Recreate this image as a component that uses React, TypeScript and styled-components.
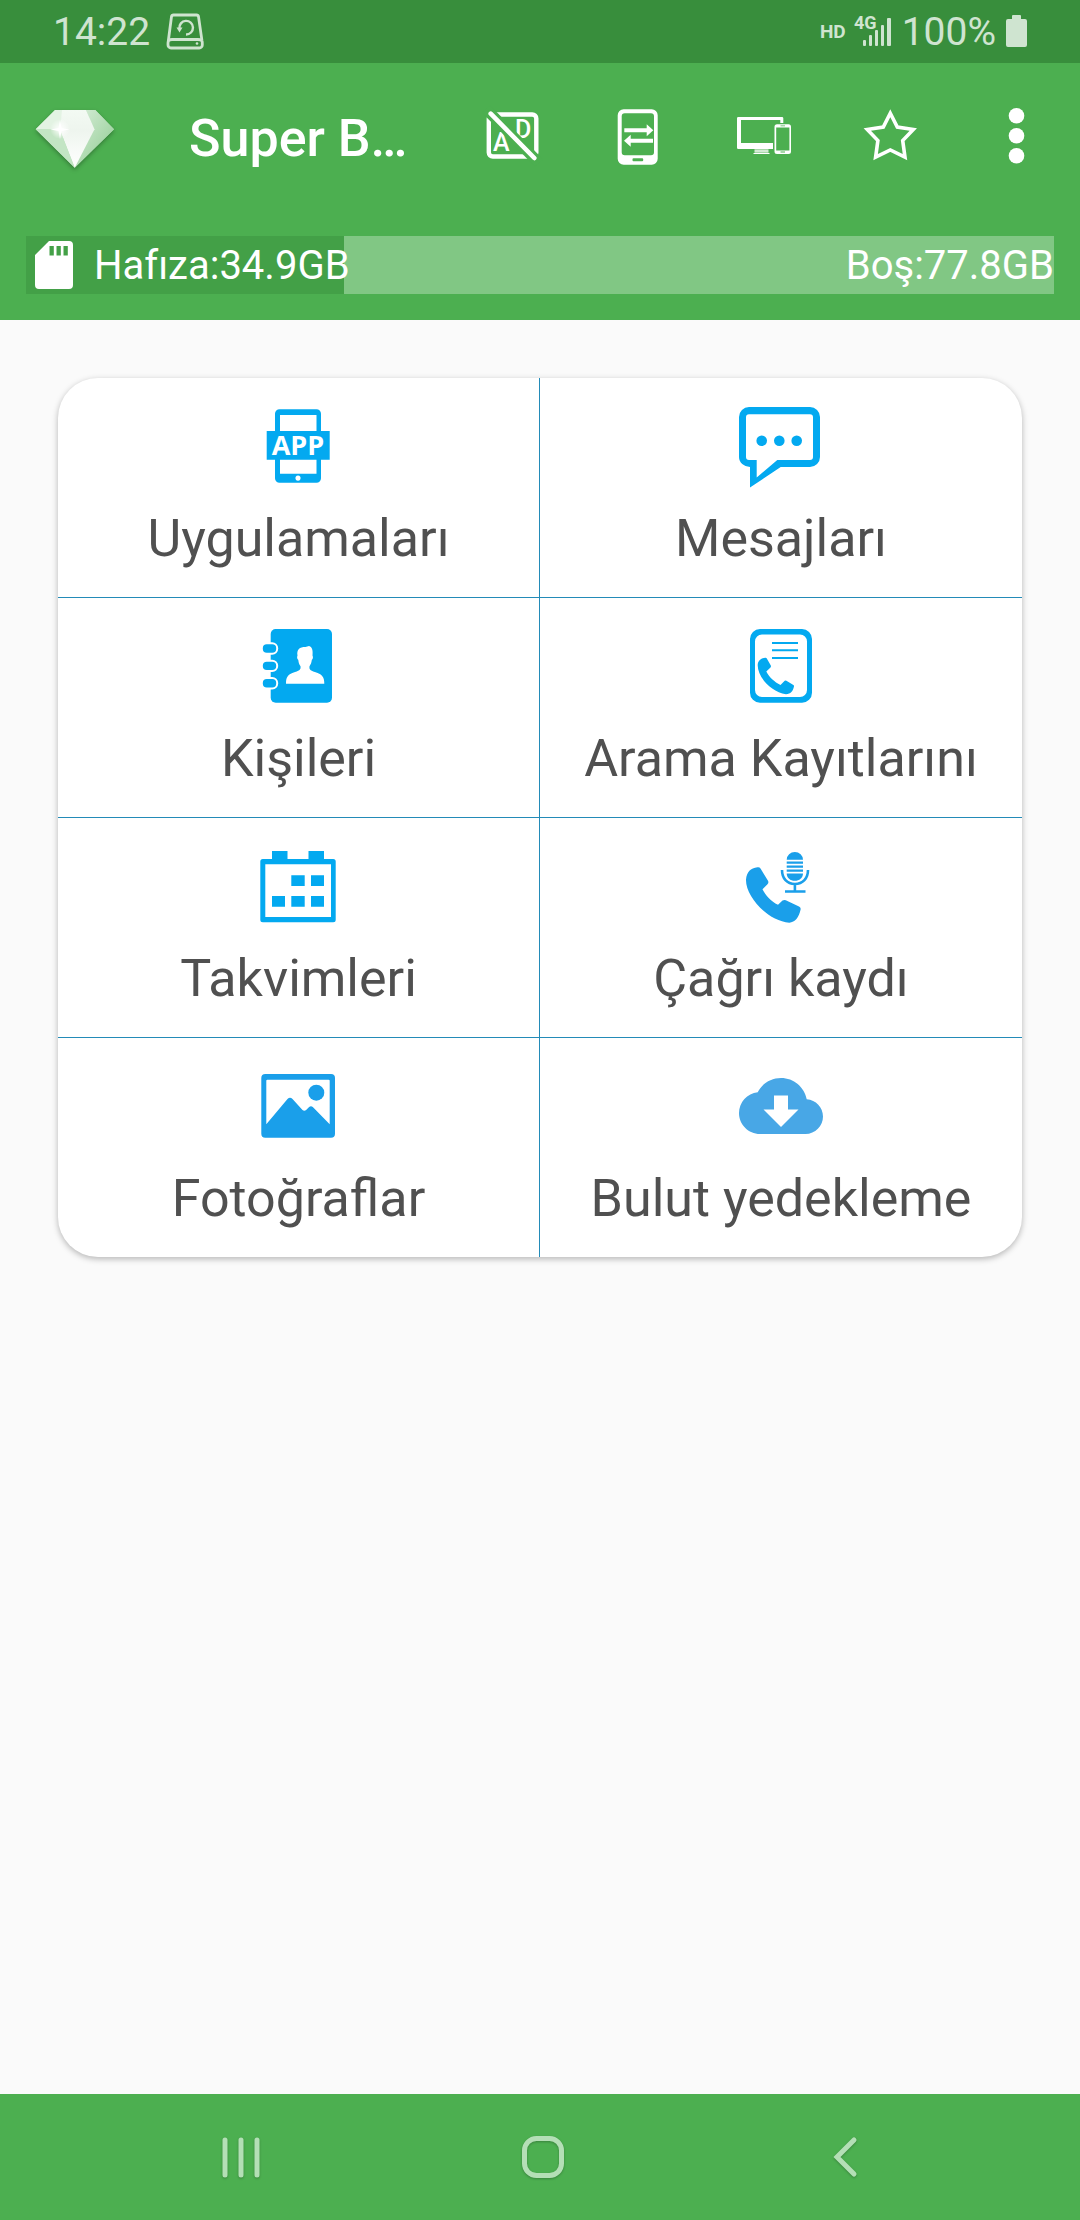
import React from "react";
import styled, { createGlobalStyle } from "styled-components";

const color = {
  primary: "#4caf50",
  primaryDark: "#388e3c",
  used: "#43a047",
  free: "#81c784",
  status: "#cfe4d0",
  nav: "#b4dfb6",
  page: "#fafafa",
  label: "#505050",
  line: "#238bb8",
  blue: "#03a9f0",
  blueAlt: "#1a9fea",
  blueCloud: "#48a7e6",
};

const GlobalStyle = createGlobalStyle`
  *, *::before, *::after { box-sizing: border-box; }
  body {
    margin: 0;
    background: ${color.page};
    font-family: Roboto, "Noto Sans", sans-serif;
  }
  button { font-family: inherit; }
  svg { display: block; flex: none; }
`;

const Screen = styled.div`
  display: flex;
  flex-direction: column;
  min-height: 100vh;
`;

const StatusBar = styled.div`
  display: flex;
  align-items: center;
  justify-content: space-between;
  height: 63px;
  padding: 0 52px 0 53px;
  background: ${color.primaryDark};
  color: ${color.status};
  font-size: 39px;
  line-height: 64px;
`;

const StatusGroup = styled.div<{ $gap: number }>`
  display: flex;
  align-items: center;
  gap: ${(p) => p.$gap}px;
`;

const HdBadge = styled.span`
  font-size: 19px;
  font-weight: 700;
  line-height: 24px;
`;

const Header = styled.header`
  background: ${color.primary};
  color: #fff;
`;

const Toolbar = styled.div`
  display: flex;
  align-items: center;
  height: 147px;
  padding-left: 33px;
`;

const Title = styled.h1`
  flex: 1;
  min-width: 0;
  margin: 0;
  padding: 4px 0 0 72px;
  overflow: hidden;
  white-space: nowrap;
  font-size: 52px;
  font-weight: 500;
  line-height: 64px;
`;

const ToolButton = styled.button`
  display: flex;
  align-items: center;
  justify-content: center;
  flex: none;
  width: 126px;
  height: 147px;
  padding: 0;
  border: 0;
  background: none;
  color: #fff;
`;

const StorageArea = styled.div`
  padding: 26px;
`;

const StorageBar = styled.div`
  display: flex;
  align-items: stretch;
  height: 58px;
  background: ${color.free};
`;

const StorageUsed = styled.div`
  display: flex;
  align-items: center;
  flex: none;
  gap: 21px;
  padding-left: 9px;
  background: ${color.used};
`;

const StorageFree = styled.div`
  display: flex;
  align-items: center;
  justify-content: flex-end;
  flex: 1;
`;

const StorageText = styled.span`
  padding-top: 2px;
  font-size: 40px;
  line-height: 56px;
  white-space: nowrap;
`;

const Main = styled.main`
  flex: 1;
  padding: 58px;
`;

const Card = styled.div`
  display: grid;
  grid-template-columns: 1fr 1fr;
  overflow: hidden;
  border-radius: 40px;
  background: #fff;
  box-shadow: 0 2px 6px rgba(0, 0, 0, 0.28);
`;

const Tile = styled.button`
  display: flex;
  flex-direction: column;
  align-items: center;
  gap: 21px;
  padding: 26px 0 28px;
  border: 0 solid ${color.line};
  border-bottom-width: 1px;
  background: none;
  color: ${color.label};

  &:nth-child(odd) {
    border-right-width: 1px;
  }
  &:nth-last-child(-n + 2) {
    border-bottom-width: 0;
  }
`;

const TileLabel = styled.span`
  font-size: 52px;
  line-height: 60px;
  white-space: nowrap;
`;

const NavBar = styled.nav`
  display: flex;
  height: 126px;
  padding: 0 84px 0 90px;
  background: ${color.primary};
`;

const NavButton = styled.button`
  display: flex;
  align-items: center;
  justify-content: center;
  flex: 1;
  padding: 0;
  border: 0;
  background: none;
  color: ${color.nav};

  svg {
    filter: drop-shadow(0 1px 1px rgba(0, 0, 0, 0.25));
  }
`;

/* Status bar drawings */

const BackupDriveIcon = () => (
  <svg width="38" height="37" viewBox="0 0 38 37" fill="none" stroke="currentColor" strokeWidth="2.8">
    <path d="M7.500 2h23a2 2 0 0 1 2 1.600L36 28a5 5 0 0 1 .3 2v2a3 3 0 0 1-3 3H5a3 3 0 0 1-3-3v-2l.3-2L5.500 3.600A2 2 0 0 1 7.500 2z" />
    <path d="M2.500 27.500q1.500-1 3.500-1h26q2.500 0 4 1" />
    <circle cx="31" cy="30.500" r="1.300" fill="currentColor" stroke="none" />
    <path d="M13.400 15.500A6.800 6.800 0 1 1 20 21.500" strokeWidth="2.400" />
    <path d="M10.500 14.500h6l-3 5z" fill="currentColor" stroke="none" />
  </svg>
);

const SignalIcon = () => (
  <svg width="38" height="43" viewBox="0 -4 38 43" fill="currentColor">
    <text x="0" y="15" fontSize="18" fontWeight="700">4G</text>
    <rect x="9" y="26" width="3" height="6" rx="1" />
    <rect x="15" y="21" width="3" height="11" rx="1" />
    <rect x="21" y="16" width="3" height="16" rx="1" />
    <rect x="27" y="11" width="3" height="21" rx="1" />
    <rect x="33" y="4" width="4" height="28" rx="1" />
  </svg>
);

const BatteryIcon = () => (
  <svg width="22" height="35" viewBox="0 0 22 35" fill="currentColor">
    <path d="M6 2a1 1 0 0 1 1-1h7a1 1 0 0 1 1 1v3h4a2 2 0 0 1 2 2v24a2 2 0 0 1-2 2H2a2 2 0 0 1-2-2V7a2 2 0 0 1 2-2h4z" />
  </svg>
);

/* Toolbar drawings */

const DiamondLogo = () => (
  <svg width="84" height="67" viewBox="0 0 84 67" overflow="visible">
    <defs>
      <linearGradient id="pane" x1="0" y1="0" x2="0" y2="1">
        <stop offset="0" stopColor="#f3faf3" />
        <stop offset="0.350" stopColor="#eef5ee" />
        <stop offset="1" stopColor="#ffffff" />
      </linearGradient>
      <linearGradient id="side" x1="0" y1="0" x2="1" y2="1">
        <stop offset="0" stopColor="#d9eeda" />
        <stop offset="1" stopColor="#8cca8e" />
      </linearGradient>
      <radialGradient id="glint">
        <stop offset="0" stopColor="#fff" />
        <stop offset="1" stopColor="#fff" stopOpacity="0" />
      </radialGradient>
    </defs>
    <g style={{ filter: "drop-shadow(0 2px 2px rgba(0,0,0,0.3))" }}>
      <path d="M22 7h40.300L81 26.300 41.700 64.700 2.700 26.300z" fill="#b5deb7" />
    </g>
    <path d="M53 7h9.300L81 26.300 41.700 64.700 61.500 26.300z" fill="url(#side)" />
    <path d="M22 7h8L27 26.500 2.700 26.300z" fill="#e3f3e3" />
    <path d="M29 7h24l8.500 19.300L41.700 64.700 27 27z" fill="url(#pane)" />
    <path d="M2.700 26.300 27 27l14.700 37.700z" fill="#c3e5c4" />
    <circle cx="27" cy="26" r="10" fill="url(#glint)" />
    <path d="M27 17l1.500 8 8 1.500-8 1.500L27 36l-1.500-8-8-1.500 8-1.500z" fill="#fff" />
  </svg>
);

const NoAdsIcon = () => (
  <svg width="64" height="63" viewBox="0 0 64 63" fill="none" stroke="#fff">
    <rect x="7.800" y="9.500" width="47.500" height="42" rx="4" strokeWidth="4.400" />
    <g fill="#fff" stroke="none" fontSize="25" fontWeight="500">
      <text x="12" y="46">A</text>
      <text x="34" y="33">D</text>
    </g>
    <path d="M5 4l53 54" stroke={color.primary} strokeWidth="11" />
    <path d="M9.700 8.700l43.600 44.300" strokeWidth="4.600" strokeLinecap="round" />
  </svg>
);

const TransferIcon = () => (
  <svg width="64" height="63" viewBox="0 0 64 63" fill="#fff">
    <path
      fillRule="evenodd"
      d="M16.700 4.300h28a6 6 0 0 1 6 6v43.400a6 6 0 0 1-6 6h-28a6 6 0 0 1-6-6V10.300a6 6 0 0 1 6-6zM17.700 8.300a3 3 0 0 0-3 3v36a3 3 0 0 0 3 3H44a3 3 0 0 0 3-3v-36a3 3 0 0 0-3-3zM26.500 53.300a1 1 0 0 0-1 1v1a1 1 0 0 0 1 1h8.700a1 1 0 0 0 1-1v-1a1 1 0 0 0-1-1z"
    />
    <path d="M17.300 23.300h22.400v-4l6.600 6-6.600 6v-4H17.300zM46 33.700H23.700v-4L17 35.800l6.700 6v-4H46z" />
  </svg>
);

const DevicesIcon = () => (
  <svg width="64" height="63" viewBox="0 0 64 63" fill="#fff">
    <path d="M5.300 12H49a1.300 1.300 0 0 1 1.300 1.300V18h-3v-3H8v23h32v6H5.300A1.300 1.300 0 0 1 4 42.700V13.300A1.300 1.300 0 0 1 5.300 12z" />
    <path d="M21.500 44.500h14v1.200h-14zM21.500 46.200h14v1.200h-14zM20.500 48h16v1h-16z" />
    <path
      fillRule="evenodd"
      d="M44 19.300h11.500a2.500 2.500 0 0 1 2.500 2.500v24.700a2.500 2.500 0 0 1-2.500 2.500H44a2.500 2.500 0 0 1-2.500-2.500V21.800a2.500 2.500 0 0 1 2.500-2.500zM43.200 22.500v23h13.200v-23zM47.500 20.500v.8h4.500v-.8zM47.500 46.500v1h4.500v-1z"
    />
  </svg>
);

const StarIcon = () => (
  <svg width="64" height="63" viewBox="0 0 64 63" fill="none" stroke="#fff" strokeWidth="3.600">
    <path d="M31.300 8.300l7 13.700 16 2.500-10.600 11 2.300 16.700-14.700-7.200-14.700 7.200 2.300-16.700-10.600-11 16-2.500z" />
  </svg>
);

const MoreIcon = () => (
  <svg width="64" height="63" viewBox="0 0 64 63" fill="#fff">
    <circle cx="31.500" cy="10.700" r="7.800" />
    <circle cx="31.500" cy="30.700" r="7.800" />
    <circle cx="31.500" cy="50.700" r="7.800" />
  </svg>
);

const SdCardIcon = () => (
  <svg width="38" height="48" viewBox="0 0 38 48" fill="#fff">
    <path
      fillRule="evenodd"
      d="M14 0h20a4 4 0 0 1 4 4v40a4 4 0 0 1-4 4H4a4 4 0 0 1-4-4V14zM14.500 5v9.500h4.300V5zM21.500 5v9.500h4.300V5zM28.500 5v9.500h4.300V5z"
    />
  </svg>
);

/* Tile drawings */

const TileSvg = ({ fill = color.blue, children }: { fill?: string; children: React.ReactNode }) => (
  <svg width="84" height="84" viewBox="0 0 84 84" fill={fill} aria-hidden="true">
    {children}
  </svg>
);

const AppsIcon = () => (
  <TileSvg>
    <path
      fillRule="evenodd"
      d="M22.500 5.300h37a4.500 4.500 0 0 1 4.500 4.500V27h8.700v28.700H64v18.500a4.500 4.500 0 0 1-4.500 4.500h-37a4.500 4.500 0 0 1-4.500-4.500V55.700H9.700V27H18V9.800a4.500 4.500 0 0 1 4.500-4.500zM23 11v16h36.500V11zM23 55.700v14h36.500v-14zM41 71.500a2.600 2.600 0 1 0 .01 0z"
    />
    <text
      x="41"
      y="51"
      textAnchor="middle"
      fill="#fff"
      fontFamily='"Open Sans", sans-serif'
      fontSize="27"
      fontWeight="700"
    >
      APP
    </text>
  </TileSvg>
);

const MessagesIcon = () => (
  <TileSvg>
    <path
      fillRule="evenodd"
      d="M10 3h61a10 10 0 0 1 10 10v40a10 10 0 0 1-10 10H41.700L11 83.500V63a11 10 0 0 1-11-10V13A10 10 0 0 1 10 3zM10 10.300a3 3 0 0 0-3 3V53a3 3 0 0 0 3 3h7.700v17.500L38.300 56H71a3 3 0 0 0 3-3V13.300a3 3 0 0 0-3-3z"
    />
    <circle cx="22.700" cy="36.700" r="5.300" />
    <circle cx="40.300" cy="36.700" r="5.300" />
    <circle cx="57.700" cy="36.700" r="5.300" />
  </TileSvg>
);

const ContactsIcon = () => (
  <TileSvg>
    <rect x="13.700" y="5" width="61.300" height="73.700" rx="5" />
    {[20.3, 37.7, 55].map((y) => (
      <rect key={y} x="4.800" y={y - 1} width="15.400" height="10.400" rx="5" stroke="#fff" strokeWidth="2" />
    ))}
    <path
      fill="#fff"
      d="M29 59.700c0-7 2-9 7-11 6-2 8-2.500 7.500-6.500-1.500-2-2-4-2.200-6.200-1.300-1-1.500-3-.8-4.500-1-6 2-8.500 8-8.500l3.500-1c3.500 1 4 5 3.500 9.500.8 1.500.5 3.500-.7 4.500-.3 2.500-1 4.500-2.300 6.200-.5 4 1.500 4.500 7.500 6.500 5 2 7.300 4 7.300 11z"
    />
  </TileSvg>
);

const CallLogIcon = () => (
  <TileSvg>
    <path
      fillRule="evenodd"
      d="M21 5h42a10 10 0 0 1 10 10v53.700a10 10 0 0 1-10 10H21a10 10 0 0 1-10-10V15A10 10 0 0 1 21 5zM23 10.500a7 7 0 0 0-7 7v48.500a7 7 0 0 0 7 7h38a7 7 0 0 0 7-7V17.500a7 7 0 0 0-7-7z"
    />
    <path d="M33 18h26v2H33zM33 25.300h26v2H33zM33 33h26v2H33z" />
    <path d="M26.500 33.800q.9-.2 1.300.7l4 7q.5 1-.3 1.900L27.300 47.500C30 53 35.500 58 41.500 61l4.200-4.200q.8-.6 1.700 0l7 4.200q.9.700.5 1.700c-.9 4.300-3.200 7.300-7.900 7.500C32 68 18.500 53 18.700 41c.3-4.500 3.300-6.700 7.800-7.200z" />
  </TileSvg>
);

const CalendarIcon = () => (
  <TileSvg>
    <path
      fillRule="evenodd"
      d="M15 7h15.500v8h21V7H67v8h9.200a2.500 2.500 0 0 1 2.500 2.500v58.300a2.500 2.500 0 0 1-2.500 2.500H5.800a2.500 2.500 0 0 1-2.500-2.500V17.500A2.500 2.500 0 0 1 5.800 15H15zM8.300 20.300V73H74V20.300z"
    />
    <path d="M34.300 31.300h13.400V42H34.300zM54 31.300h13V42H54zM15 52h13v10.700H15zM34.300 52h13.400v10.700H34.300zM54 52h13v10.700H54z" />
  </TileSvg>
);

const CallRecordIcon = () => (
  <TileSvg fill={color.blueAlt}>
    <path d="M18.500 23.300q2-.4 3 1.200l7.500 12.200q1 2-.5 3.500L23.500 45.300C26.500 51.500 32 57.500 39 60.800l4.500-4.300q1.700-1 3.300-.3l13.200 6.300q2 1 1.600 3c-1.600 8-5.600 12.700-11.300 13.200C29 77 6.500 53 7 35.500c.8-7.500 4.500-11.500 11.500-12.200z" />
    <path d="M47.700 15.800a8.150 7.800 0 0 1 16.300 0zM47.700 17.500H64v2.300H47.700zM47.700 21.500H64v2.300H47.700zM47.700 25.500H64v2.300H47.700zM47.700 29.500H64c0 4.500-3.600 7.300-8.150 7.300s-8.150-2.800-8.150-7.300z" />
    <path
      d="M43 26c0 8.500 5 14 12.900 14S69 34.500 69 26M55.900 40v8M46 47.500h20.500"
      fill="none"
      stroke={color.blueAlt}
      strokeWidth="2.600"
    />
  </TileSvg>
);

const PhotosIcon = () => (
  <TileSvg fill={color.blueAlt}>
    <path
      fillRule="evenodd"
      d="M8.300 10H74a4 4 0 0 1 4 4v55.700a4 4 0 0 1-4 4H8.300a4 4 0 0 1-4-4V14a4 4 0 0 1 4-4zM10.300 15.700a1 1 0 0 0-1 1v43.600L30.500 35q2.500-2.500 5 0l10 11q1.800 1.500 3.600 0l3-3q1.900-1.500 3.700 0l16.900 17.300V16.700a1 1 0 0 0-1-1z"
    />
    <circle cx="59.300" cy="28.700" r="8" />
  </TileSvg>
);

const CloudIcon = () => (
  <svg width="84" height="84" viewBox="0 0 24 24" fill={color.blueCloud} aria-hidden="true">
    <path d="M19.350 10.040C18.670 6.590 15.640 4 12 4 9.110 4 6.600 5.640 5.350 8.040 2.340 8.360 0 10.910 0 14c0 3.310 2.690 6 6 6h13c2.760 0 5-2.240 5-5 0-2.640-2.050-4.780-4.650-4.960zM17 13l-5 5-5-5h3V9h4v4h3z" />
  </svg>
);

const tools = [
  { name: "Reklamları kaldır", Icon: NoAdsIcon },
  { name: "Aktar", Icon: TransferIcon },
  { name: "Cihazlar", Icon: DevicesIcon },
  { name: "Favori", Icon: StarIcon },
  { name: "Diğer", Icon: MoreIcon },
];

const tiles = [
  { label: "Uygulamaları", Icon: AppsIcon },
  { label: "Mesajları", Icon: MessagesIcon },
  { label: "Kişileri", Icon: ContactsIcon },
  { label: "Arama Kayıtlarını", Icon: CallLogIcon },
  { label: "Takvimleri", Icon: CalendarIcon },
  { label: "Çağrı kaydı", Icon: CallRecordIcon },
  { label: "Fotoğraflar", Icon: PhotosIcon },
  { label: "Bulut yedekleme", Icon: CloudIcon },
];

const storage = { used: 34.9, free: 77.8 };

export default function App() {
  const usedShare = (storage.used / (storage.used + storage.free)) * 100;

  return (
    <Screen>
      <GlobalStyle />
      <StatusBar>
        <StatusGroup $gap={16}>
          <span>14:22</span>
          <BackupDriveIcon />
        </StatusGroup>
        <StatusGroup $gap={8}>
          <HdBadge>HD</HdBadge>
          <StatusGroup $gap={10}>
            <SignalIcon />
            <span>100%</span>
            <BatteryIcon />
          </StatusGroup>
        </StatusGroup>
      </StatusBar>

      <Header>
        <Toolbar>
          <DiamondLogo />
          <Title>Super B…</Title>
          {tools.map(({ name, Icon }) => (
            <ToolButton key={name} type="button" aria-label={name}>
              <Icon />
            </ToolButton>
          ))}
        </Toolbar>
        <StorageArea>
          <StorageBar>
            <StorageUsed style={{ width: `${usedShare}%` }}>
              <SdCardIcon />
              <StorageText>Hafıza:{storage.used}GB</StorageText>
            </StorageUsed>
            <StorageFree>
              <StorageText>Boş:{storage.free}GB</StorageText>
            </StorageFree>
          </StorageBar>
        </StorageArea>
      </Header>

      <Main>
        <Card>
          {tiles.map(({ label, Icon }) => (
            <Tile key={label} type="button">
              <Icon />
              <TileLabel>{label}</TileLabel>
            </Tile>
          ))}
        </Card>
      </Main>

      <NavBar>
        <NavButton type="button" aria-label="Son uygulamalar">
          <svg width="42" height="42" viewBox="0 0 42 42" stroke="currentColor" strokeWidth="5" strokeLinecap="round">
            <path d="M5 4v35M21 4v35M37 4v35" />
          </svg>
        </NavButton>
        <NavButton type="button" aria-label="Ana ekran">
          <svg width="42" height="42" viewBox="0 0 42 42" fill="none" stroke="currentColor" strokeWidth="5">
            <rect x="2.500" y="2.500" width="37" height="37" rx="12" />
          </svg>
        </NavButton>
        <NavButton type="button" aria-label="Geri">
          <svg width="42" height="42" viewBox="0 0 42 42" fill="none" stroke="currentColor" strokeWidth="5" strokeLinecap="round">
            <path d="M30 4 13 21l17 17" />
          </svg>
        </NavButton>
      </NavBar>
    </Screen>
  );
}
